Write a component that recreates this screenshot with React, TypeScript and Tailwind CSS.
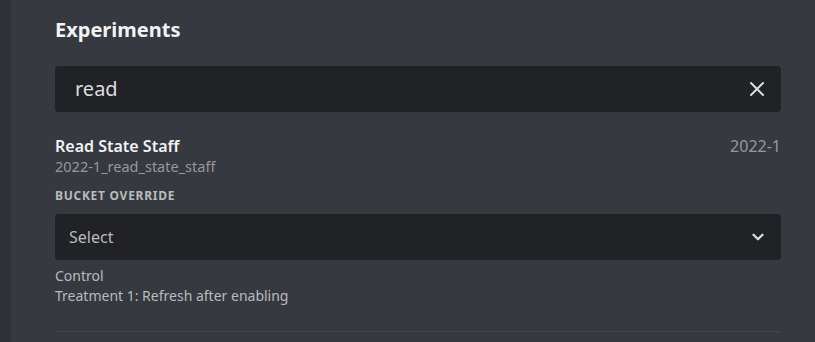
import { X, ChevronDown } from "lucide-react";

export default function App() {
  return (
    <div className="flex h-[342px] w-[815px] overflow-hidden bg-[#36393f] font-['Noto_Sans',sans-serif]">
      <div className="w-[11px] shrink-0 bg-[#2f3136]" />
      <div className="flex-1 pl-[44px] pr-[34px] pt-[16px]">
        <h1 className="text-[20px] font-bold leading-[28px] text-[#f2f3f5]">Experiments</h1>

        {/* Search */}
        <div className="mt-[22px] flex h-[46px] items-center rounded-[4px] bg-[#202225] pl-[20px] pr-[12px]">
          <span className="flex-1 text-[20px] text-[#dcddde]">read</span>
          <X className="h-[24px] w-[24px] text-[#dcddde]" strokeWidth={2} />
        </div>

        {/* Experiment */}
        <div className="mt-[24px] flex items-start justify-between">
          <div>
            <div className="text-[16px] font-semibold leading-[20px] text-[#f2f3f5]">Read State Staff</div>
            <div className="text-[14.5px] leading-[20px] text-[#96989d]">2022-1_read_state_staff</div>
          </div>
          <div className="text-[16px] leading-[20px] text-[#96989d]">2022-1</div>
        </div>
        <div className="mt-[12px] text-[12px] font-bold uppercase leading-[16px] tracking-[0.06em] text-[#b9bbbe]">
          Bucket override
        </div>
        <div className="mt-[10px] flex h-[46px] items-center rounded-[4px] bg-[#202225] pl-[14px] pr-[14px]">
          <span className="flex-1 text-[16px] text-[#b9bbbe]">Select</span>
          <ChevronDown className="h-[18px] w-[18px] text-[#dcddde]" strokeWidth={3} />
        </div>
        <div className="mt-[6px] text-[14px] leading-[20px] text-[#b9bbbe]">Control</div>
        <div className="text-[14px] leading-[20px] text-[#b9bbbe]">Treatment 1: Refresh after enabling</div>

        <div className="mt-[25px] h-px bg-[#42454a]" />
      </div>
    </div>
  );
}
